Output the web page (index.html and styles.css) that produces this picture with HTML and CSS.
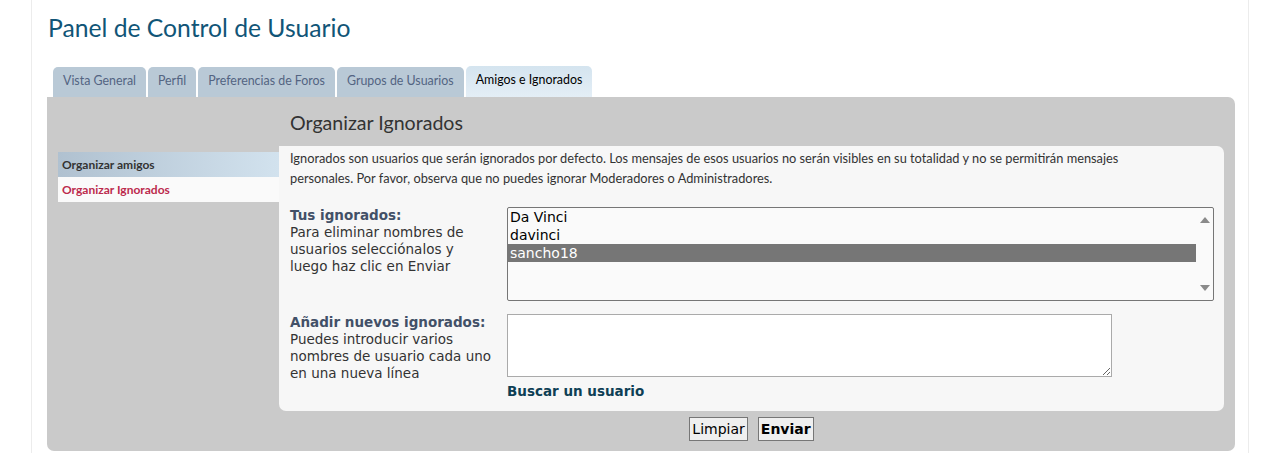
FILE: index.html
```html
<!DOCTYPE html>
<html lang="es">
<head>
    <meta charset="UTF-8">
    <meta name="viewport" content="width=device-width, initial-scale=1.0">
    <title>Panel de Control de Usuario</title>
    <link rel="stylesheet" href="styles.css">
</head>
<body>
    <div class="page">
        <h1 class="title">Panel de Control de Usuario</h1>

        <ul class="tabs">
            <li class="tab">Vista General</li>
            <li class="tab">Perfil</li>
            <li class="tab">Preferencias de Foros</li>
            <li class="tab">Grupos de Usuarios</li>
            <li class="tab active">Amigos e Ignorados</li>
        </ul>

        <div class="panel">
            <ul class="side-menu">
                <li class="side-item">Organizar amigos</li>
                <li class="side-item current">Organizar Ignorados</li>
            </ul>

            <div class="main">
                <h2 class="main-title">Organizar Ignorados</h2>

                <div class="box">
                    <p class="intro">Ignorados son usuarios que serán ignorados por defecto. Los mensajes de esos usuarios no serán visibles en su totalidad y no se permitirán mensajes personales. Por favor, observa que no puedes ignorar Moderadores o Administradores.</p>

                    <div class="row">
                        <div class="label">
                            <b>Tus ignorados:</b><br>
                            Para eliminar nombres de<br>
                            usuarios selecciónalos y<br>
                            luego haz clic en Enviar
                        </div>
                        <div class="list-wrap">
                            <select class="user-list" multiple size="5">
                                <option>Da Vinci</option>
                                <option>davinci</option>
                                <option class="picked">sancho18</option>
                            </select>
                            <span class="arrow up"></span>
                            <span class="arrow down"></span>
                        </div>
                    </div>

                    <div class="row second">
                        <div class="label">
                            <b>Añadir nuevos ignorados:</b><br>
                            Puedes introducir varios<br>
                            nombres de usuario cada uno<br>
                            en una nueva línea
                        </div>
                        <div>
                            <textarea class="new-users"></textarea>
                            <a class="find-user" href="#">Buscar un usuario</a>
                        </div>
                    </div>
                </div>

                <div class="actions">
                    <button class="btn">Limpiar</button>
                    <button class="btn strong">Enviar</button>
                </div>
            </div>
        </div>
    </div>
</body>
</html>
```

FILE: styles.css
```css
* {
    box-sizing: border-box;
}

body {
    margin: 0;
    background-color: #fff;
    font-family: Lato, "Open Sans", sans-serif;
}

.page {
    margin-left: 31px;
    width: 1218px;
    min-height: 453px;
    padding: 0 13px 0 15px;
    border-left: 1px solid #ececec;
    border-right: 1px solid #ececec;
}

.title {
    margin: 0;
    padding: 12px 0 0 1px;
    height: 66px;
    font-size: 24.7px;
    font-weight: normal;
    color: #115577;
    line-height: 32px;
}

.tabs {
    list-style: none;
    display: flex;
    align-items: flex-end;
    gap: 2px;
    margin: 0;
    padding: 0 0 0 6px;
    height: 31px;
}

.tab {
    height: 30px;
    padding: 0 10px;
    font-size: 12.4px;
    line-height: 27px;
    color: #536482;
    background-color: #b9c9d6;
    border-radius: 5px 5px 0 0;
}

.tab.active {
    height: 31px;
    line-height: 28px;
    color: #000;
    background: linear-gradient(#d4e4ef, #e4eef6);
}

.panel {
    display: grid;
    grid-template-columns: 221px 1fr;
    height: 354px;
    padding: 0 11px;
    background-color: #cacaca;
    border-radius: 0 7px 7px 7px;
}

.side-menu {
    list-style: none;
    margin: 55px 0 0;
    padding: 0;
}

.side-item {
    height: 25px;
    padding-left: 4px;
    font-size: 12px;
    font-weight: bold;
    line-height: 25px;
    color: #333;
    background: linear-gradient(to right, #b0c1d0, #d2e2ee);
}

.side-item.current {
    color: #bc2a4d;
    background: #fafafa;
}

.main-title {
    margin: 14px 0 11px 11px;
    font-size: 19.6px;
    font-weight: normal;
    line-height: 24px;
    color: #333;
}

.box {
    padding: 2px 10px 11px 11px;
    background-color: #f7f7f7;
    border-radius: 0 7px 7px 7px;
}

.intro {
    margin: 0 0 19px;
    padding-right: 90px;
    font-size: 12.8px;
    line-height: 20px;
    color: #333;
}

.row {
    display: grid;
    grid-template-columns: 217px 1fr;
}

.row.second {
    margin-top: 13px;
}

.label {
    font-family: "DejaVu Sans", Verdana, sans-serif;
    font-size: 13.5px;
    line-height: 17px;
    color: #333;
    white-space: nowrap;
}

.label b {
    color: #425067;
}

.list-wrap {
    position: relative;
}

.user-list {
    display: block;
    width: 100%;
    height: 94px;
    margin: 0;
    padding: 0 17px 0 0;
    font-family: "DejaVu Sans", Verdana, sans-serif;
    font-size: 14px;
    color: #000;
    background-color: #fafafa;
    border: 1px solid #767676;
    border-radius: 2px;
    overflow: hidden;
    outline: none;
}

.user-list option {
    padding: 1px 2px 1px;
}

.user-list option.picked {
    background-color: #767676;
    color: #fff;
}

/* fake scrollbar arrows */
.arrow {
    position: absolute;
    right: 4px;
    width: 0;
    height: 0;
    border-left: 5px solid transparent;
    border-right: 5px solid transparent;
}

.arrow.up {
    top: 10px;
    border-bottom: 6px solid #8a8a8a;
}

.arrow.down {
    bottom: 10px;
    border-top: 6px solid #8a8a8a;
}

.new-users {
    display: block;
    width: 605px;
    height: 63px;
    margin: 0;
    background-color: #fff;
    border: 1px solid #aaa;
    resize: both;
}

.find-user {
    display: inline-block;
    margin-top: 6px;
    font-family: "DejaVu Sans", Verdana, sans-serif;
    font-size: 13.5px;
    font-weight: bold;
    line-height: 17px;
    color: #0e3f55;
    text-decoration: none;
}

.actions {
    display: flex;
    justify-content: center;
    gap: 10px;
    margin-top: 6px;
}

.btn {
    height: 24px;
    padding: 0 2px;
    font-family: "DejaVu Sans", Verdana, sans-serif;
    font-size: 14px;
    color: #000;
    background-color: #efefef;
    border: 1px solid #767676;
}

.btn.strong {
    font-weight: bold;
}
```
